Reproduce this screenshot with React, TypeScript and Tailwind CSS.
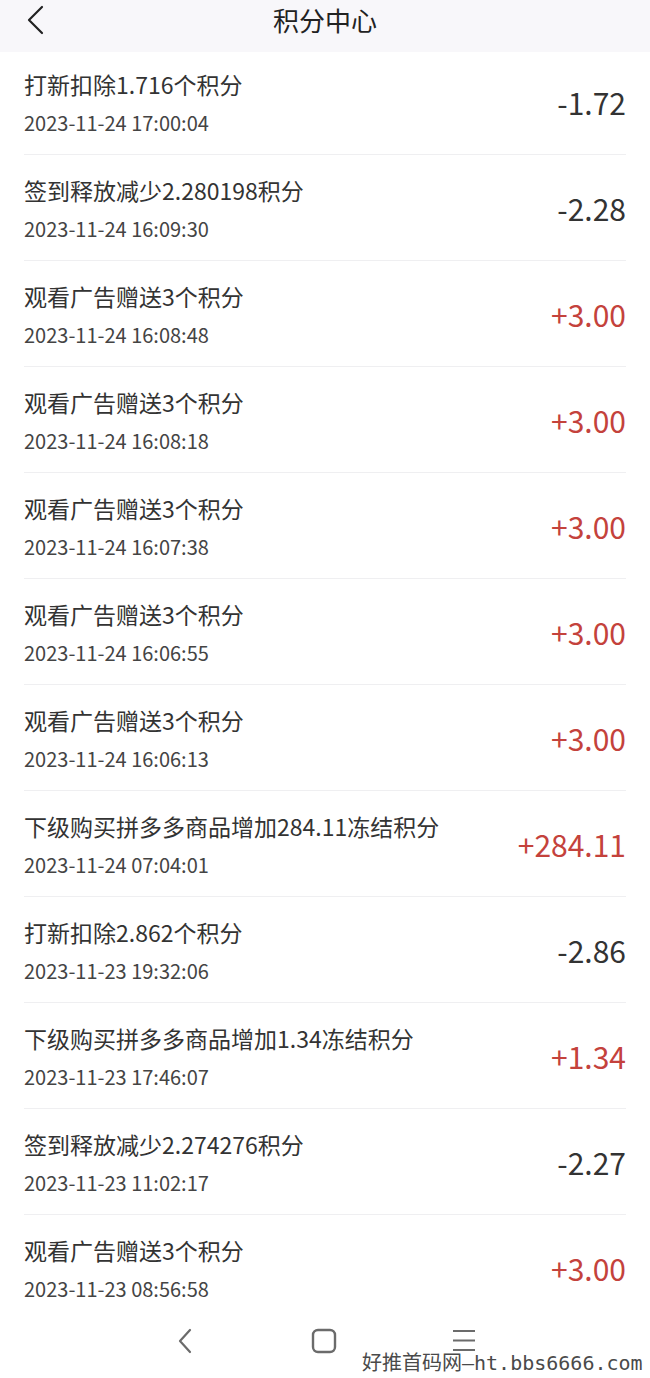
type Record = {
  title: string
  time: string
  amount: string
  plus: boolean
}

const records: Record[] = [
  { title: '打新扣除1.716个积分', time: '2023-11-24 17:00:04', amount: '-1.72', plus: false },
  { title: '签到释放减少2.280198积分', time: '2023-11-24 16:09:30', amount: '-2.28', plus: false },
  { title: '观看广告赠送3个积分', time: '2023-11-24 16:08:48', amount: '+3.00', plus: true },
  { title: '观看广告赠送3个积分', time: '2023-11-24 16:08:18', amount: '+3.00', plus: true },
  { title: '观看广告赠送3个积分', time: '2023-11-24 16:07:38', amount: '+3.00', plus: true },
  { title: '观看广告赠送3个积分', time: '2023-11-24 16:06:55', amount: '+3.00', plus: true },
  { title: '观看广告赠送3个积分', time: '2023-11-24 16:06:13', amount: '+3.00', plus: true },
  { title: '下级购买拼多多商品增加284.11冻结积分', time: '2023-11-24 07:04:01', amount: '+284.11', plus: true },
  { title: '打新扣除2.862个积分', time: '2023-11-23 19:32:06', amount: '-2.86', plus: false },
  { title: '下级购买拼多多商品增加1.34冻结积分', time: '2023-11-23 17:46:07', amount: '+1.34', plus: true },
  { title: '签到释放减少2.274276积分', time: '2023-11-23 11:02:17', amount: '-2.27', plus: false },
  { title: '观看广告赠送3个积分', time: '2023-11-23 08:56:58', amount: '+3.00', plus: true },
]

function RecordRow({ item, first, last }: { item: Record; first: boolean; last: boolean }) {
  return (
    <li
      className={`mx-6 flex items-center justify-between ${first ? 'pt-[16px]' : 'pt-[19px]'} ${
        last ? 'pb-0' : 'border-b border-[#efeff1] pb-[18px]'
      }`}
    >
      <div className="min-w-0">
        <p className="text-[23px] leading-[32px] text-[#333333]">{item.title}</p>
        <p className="mt-[10px] text-[20px] leading-[26px] text-[#444444]">{item.time}</p>
      </div>
      <span className={`text-[30px] leading-[40px] ${item.plus ? 'text-[#c4423c]' : 'text-[#333333]'}`}>
        {item.amount}
      </span>
    </li>
  )
}

export default function App() {
  return (
    <div
      className="relative h-[1378px] w-[650px] overflow-hidden bg-white"
      style={{ fontFamily: '"Noto Sans CJK SC", "Noto Sans", sans-serif' }}
    >
      <header className="relative flex h-[52px] items-start justify-center bg-[#f8f7fa] pt-[3px]">
        <svg
          className="absolute left-[25px] top-[5px] text-[#222222]"
          width="22"
          height="30"
          viewBox="0 0 22 30"
          fill="none"
          stroke="currentColor"
          strokeWidth="2.2"
          strokeLinecap="round"
          strokeLinejoin="round"
        >
          <path d="M17 2 L4 15 L17 28" />
        </svg>
        <h1 className="text-[26px] leading-[34px] text-[#222222]">积分中心</h1>
      </header>

      <ul>
        {records.map((item, i) => (
          <RecordRow key={i} item={item} first={i === 0} last={i === records.length - 1} />
        ))}
      </ul>

      <nav className="flex h-[76px] items-start justify-center gap-[113px] pt-[26px] text-[#6b6b6b]">
        <svg width="24" height="26" viewBox="0 0 24 26" fill="none" stroke="currentColor" strokeWidth="2.2" strokeLinecap="round" strokeLinejoin="round">
          <path d="M16 2 L6 13 L16 24" />
        </svg>
        <svg width="26" height="26" viewBox="0 0 26 26" fill="none" stroke="currentColor" strokeWidth="2.4">
          <rect x="2" y="2" width="22" height="22" rx="5" />
        </svg>
        <svg width="26" height="26" viewBox="0 0 26 26" fill="none" stroke="currentColor" strokeWidth="2.2">
          <path d="M3 3 H25 M3 12.5 H25 M3 22 H25" />
        </svg>
      </nav>

      <div
        className="absolute left-[362px] top-[1351px] whitespace-nowrap text-[20px] leading-[24px] text-[#4a4a4a]"
        style={{ fontFamily: '"DejaVu Sans Mono", "Noto Sans CJK SC", monospace' }}
      >
        好推首码网—ht.bbs6666.com
      </div>
    </div>
  )
}
